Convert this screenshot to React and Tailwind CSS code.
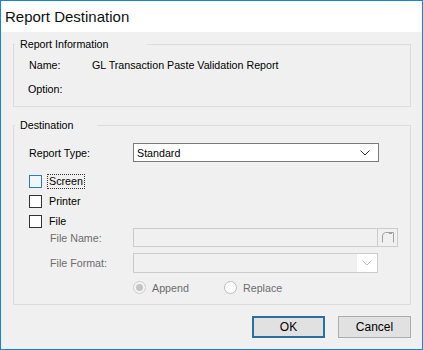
const font = { fontFamily: '"Liberation Sans", Arial, sans-serif' }

function Chevron({ color = '#333' }) {
  return (
    <svg width="10" height="6" viewBox="0 0 10 6" fill="none">
      <path d="M0.5 0.5 L5 5 L9.5 0.5" stroke={color} strokeWidth="1" />
    </svg>
  )
}

function Group({ title, legendWidth, className, children }) {
  return (
    <div className={`relative border border-[#dcdcdc] ${className}`}>
      <span
        className="absolute -top-[8px] left-[1px] h-[15px] bg-[#f0f0f0] pl-[5px] leading-[15px] text-black"
        style={{ width: legendWidth }}
      >
        {title}
      </span>
      {children}
    </div>
  )
}

function Check({ label, focused }) {
  return (
    <div className="flex h-[17px] items-center pl-[15px]">
      <span
        className={
          focused
            ? 'h-[13px] w-[13px] border border-[#2d7db3] bg-[#eef7fc]'
            : 'h-[13px] w-[13px] border border-[#333] bg-white'
        }
      />
      <span
        className={
          focused
            ? 'ml-[5px] border border-dotted border-[#333] px-[1px] leading-[13px]'
            : 'ml-[7px] leading-[13px]'
        }
      >
        {label}
      </span>
    </div>
  )
}

export default function App() {
  return (
    <div
      className="flex h-[350px] w-[423px] flex-col border border-[#1883d7] bg-[#f0f0f0] text-[10.7px] leading-[14px] text-black"
      style={font}
    >
      <div className="flex h-[31px] items-center bg-white pl-[4px] text-[15px] text-[#111]">
        Report Destination
      </div>

      <div className="flex flex-col pl-[12px] pr-[11px]">
        <Group title="Report Information" legendWidth={132} className="mt-[12px] h-[63px]">
          <div className="flex pt-[13px] pl-[15px]">
            <span className="w-[63px]">Name:</span>
            <span>GL Transaction Paste Validation Report</span>
          </div>
          <div className="mt-[10px] pl-[14px]">Option:</div>
        </Group>

        <Group title="Destination" legendWidth={82} className="mt-[18px] h-[180px]">
          <div className="flex flex-col">
            <div className="mt-[17px] flex h-[19px] items-center pl-[15px]">
              <span className="w-[104px]">Report Type:</span>
              <div className="flex h-[19px] w-[246px] items-center justify-between border border-[#7a7a7a] bg-white pl-[3px] pr-[8px]">
                <span>Standard</span>
                <Chevron />
              </div>
            </div>

            <div className="mt-[11px]">
              <Check label="Screen" focused />
            </div>
            <div className="mt-[3px]">
              <Check label="Printer" />
            </div>
            <div className="mt-[3px]">
              <Check label="File" />
            </div>

            <div className="-mt-[2px] flex h-[19px] items-center pl-[36px] text-[#6d6d6d]">
              <span className="w-[83px]">File Name:</span>
              <div className="h-[19px] w-[245px] border border-[#cccccc] bg-[#f0f0f0]" />
              <div className="flex h-[19px] w-[20px] items-center justify-center border border-l-0 border-[#cccccc]">
                <svg width="12" height="11" viewBox="0 0 12 11" fill="none">
                  <path d="M0.5 10.5 V4 Q0.5 1 3.5 0.5 H11.5 V10.5" stroke="#a0a0a0" strokeWidth="1" />
                  <path d="M7 1.5 H10" stroke="#a0a0a0" strokeWidth="1" />
                </svg>
              </div>
            </div>

            <div className="mt-[6px] flex h-[20px] items-center pl-[36px] text-[#6d6d6d]">
              <span className="w-[83px]">File Format:</span>
              <div className="flex h-[20px] w-[245px] items-center justify-end border border-[#cccccc] bg-[#f0f0f0]">
                <div className="flex h-full w-[20px] items-center justify-center bg-white">
                  <Chevron color="#bcbcbc" />
                </div>
              </div>
            </div>

            <div className="mt-[6px] flex h-[17px] items-center pl-[119px] text-[#6d6d6d]">
              <span className="flex h-[13px] w-[13px] items-center justify-center rounded-full border border-[#cccccc] bg-[#f4f4f4]">
                <span className="h-[7px] w-[7px] rounded-full bg-[#c4c4c4]" />
              </span>
              <span className="ml-[6px] w-[72px]">Append</span>
              <span className="h-[13px] w-[13px] rounded-full border border-[#bcbcbc] bg-white" />
              <span className="ml-[6px]">Replace</span>
            </div>
          </div>
        </Group>

        <div className="mt-[11px] flex justify-end gap-[13px]">
          <button className="h-[22px] w-[73px] border-2 border-[#2a6fa0] bg-[#e1e1e1] text-[12px]">OK</button>
          <button className="h-[22px] w-[73px] border border-[#adadad] bg-[#e1e1e1] text-[12px]">Cancel</button>
        </div>
      </div>
    </div>
  )
}
